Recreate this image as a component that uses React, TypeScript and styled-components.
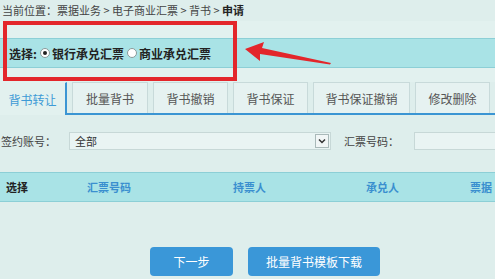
import styled, { createGlobalStyle } from "styled-components";

const GlobalStyle = createGlobalStyle`
  html, body {
    margin: 0;
    padding: 0;
    background: #deeeec;
    overflow: hidden;
  }
  body {
    font-family: "Noto Sans CJK SC", "Noto Sans", sans-serif;
    color: #333;
  }
`;

const Page = styled.div`
  width: 495px;
  height: 279px;
  display: flex;
  flex-direction: column;
  position: relative;
  overflow: hidden;
`;

// breadcrumb along the top
const Crumbs = styled.div`
  height: 21px;
  padding-left: 2px;
  font-size: 11px;
  line-height: 20px;
  color: #444;
  white-space: nowrap;
`;

const Current = styled.b`
  color: #222;
`;

// area with the bill type choice
const ChoiceArea = styled.div`
  height: 61px;
  padding-top: 17px;
  box-sizing: border-box;
  background: #e2f1ef;
`;

const Band = styled.div`
  height: 30px;
  background: #a9e3e6;
  border-top: 1px solid #8ccfd6;
  border-bottom: 1px solid #8ccfd6;
  box-sizing: border-box;
  display: flex;
  align-items: center;
  padding-left: 9px;
  font-size: 12px;
  font-weight: bold;
  color: #222;
  white-space: nowrap;
`;

const Radio = styled.span<{ $on?: boolean }>`
  width: 8px;
  height: 8px;
  border-radius: 50%;
  border: 1px solid #8a9a9a;
  background: #fff;
  display: inline-flex;
  align-items: center;
  justify-content: center;
  margin: 0 2px 0 3px;
  flex-shrink: 0;
  &::after {
    content: "";
    width: 4px;
    height: 4px;
    border-radius: 50%;
    background: ${(p) => (p.$on ? "#222" : "transparent")};
  }
`;

// annotation overlay
const RedBox = styled.div`
  position: absolute;
  left: 3px;
  top: 21px;
  width: 234px;
  height: 60px;
  border: 4px solid #e3262b;
  box-sizing: border-box;
  pointer-events: none;
`;

const Arrow = styled.svg`
  position: absolute;
  left: 243px;
  top: 40px;
`;

// tabs
const TabBar = styled.div`
  height: 33px;
  display: flex;
  gap: 5px;
  align-items: flex-end;
  border-bottom: 2px solid #3b95d3;
  box-sizing: border-box;
`;

const Tab = styled.div<{ $active?: boolean; $w: number }>`
  width: ${(p) => p.$w}px;
  height: ${(p) => (p.$active ? 33 : 31)}px;
  box-sizing: border-box;
  display: flex;
  align-items: center;
  justify-content: center;
  font-size: 12px;
  color: ${(p) => (p.$active ? "#3d9ad6" : "#555")};
  background: ${(p) => (p.$active ? "#e2f1ef" : "#e6f2f1")};
  border: 1px solid ${(p) => (p.$active ? "#3b95d3" : "#c8dada")};
  border-left: ${(p) => (p.$active ? "none" : "1px solid #c8dada")};
  border-right-width: ${(p) => (p.$active ? 2 : 1)}px;
  border-top-color: ${(p) => (p.$active ? "#e2f1ef" : "#c8dada")};
  border-bottom: none;
  margin-bottom: ${(p) => (p.$active ? -2 : 0)}px;
  flex-shrink: 0;
`;

// search form row
const FormRow = styled.div`
  margin-top: 16px;
  height: 20px;
  display: flex;
  align-items: center;
  font-size: 11px;
  color: #444;
  white-space: nowrap;
`;

const Label = styled.span<{ $w: number; $ml?: number }>`
  width: ${(p) => p.$w}px;
  margin-left: ${(p) => p.$ml ?? 0}px;
  flex-shrink: 0;
`;

const Select = styled.div`
  width: 262px;
  height: 18px;
  box-sizing: border-box;
  border: 1px solid #c7d8d7;
  background: #e9f4f3;
  display: flex;
  align-items: center;
  padding-left: 5px;
  flex-shrink: 0;
`;

const SelectText = styled.span`
  flex: 1;
  color: #333;
`;

const Caret = styled.span`
  width: 14px;
  height: 14px;
  margin-right: 1px;
  border: 1px solid #a9b9b9;
  box-sizing: border-box;
  background: #f1f6f6;
  display: flex;
  align-items: center;
  justify-content: center;
`;

const Input = styled.div`
  width: 100px;
  height: 18px;
  border: 1px solid #c7d8d7;
  background: #e9f4f3;
  box-sizing: border-box;
  flex-shrink: 0;
`;

// list header
const TableHead = styled.div`
  margin-top: 21px;
  height: 30px;
  background: #a9e3e6;
  border-top: 1px solid #8ccfd6;
  border-bottom: 1px solid #8ccfd6;
  box-sizing: border-box;
  display: flex;
  align-items: center;
  padding-left: 6px;
  font-size: 11px;
  font-weight: bold;
  white-space: nowrap;
`;

const Col = styled.span<{ $x: number; $blue?: boolean }>`
  width: ${(p) => p.$x}px;
  flex-shrink: 0;
  color: ${(p) => (p.$blue ? "#3a8fcf" : "#222")};
`;

const Actions = styled.div`
  margin-top: 45px;
  display: flex;
  gap: 15px;
  padding-left: 150px;
`;

const Button = styled.div<{ $w: number }>`
  width: ${(p) => p.$w}px;
  height: 29px;
  border-radius: 4px;
  background: #3a97d8;
  color: #fff;
  font-size: 12px;
  display: flex;
  align-items: center;
  justify-content: center;
  flex-shrink: 0;
`;

const tabs = [
  { name: "背书转让", w: 67, active: true },
  { name: "批量背书", w: 76 },
  { name: "背书撤销", w: 75 },
  { name: "背书保证", w: 75 },
  { name: "背书保证撤销", w: 97 },
  { name: "修改删除", w: 75 },
];

const App = () => {
  return (
    <Page>
      <GlobalStyle />
      <Crumbs>
        当前位置：票据业务 &gt; 电子商业汇票 &gt; 背书 &gt; <Current>申请</Current>
      </Crumbs>

      <ChoiceArea>
        <Band>
          <span>选择:</span>
          <Radio $on />
          <span>银行承兑汇票</span>
          <Radio />
          <span>商业承兑汇票</span>
        </Band>
      </ChoiceArea>

      <TabBar>
        {tabs.map((t) => (
          <Tab key={t.name} $w={t.w} $active={t.active}>
            {t.name}
          </Tab>
        ))}
      </TabBar>

      <FormRow>
        <Label $w={68} $ml={1}>签约账号：</Label>
        <Select>
          <SelectText>全部</SelectText>
          <Caret>
            <svg width="8" height="6" viewBox="0 0 8 6">
              <path d="M1 1.5 L4 4.5 L7 1.5" fill="none" stroke="#333" strokeWidth="1.5" />
            </svg>
          </Caret>
        </Select>
        <Label $w={70} $ml={13}>汇票号码：</Label>
        <Input />
      </FormRow>

      <TableHead>
        <Col $x={81}>选择</Col>
        <Col $x={146} $blue>汇票号码</Col>
        <Col $x={133} $blue>持票人</Col>
        <Col $x={104} $blue>承兑人</Col>
        <Col $x={25} $blue>票据</Col>
      </TableHead>

      <Actions>
        <Button $w={83}>下一步</Button>
        <Button $w={132}>批量背书模板下载</Button>
      </Actions>

      <RedBox />
      <Arrow width="92" height="26" viewBox="0 0 92 26">
        <path d="M2 9 L21 2 L19 8 L88 23 L87 24.5 L17 14 L17 21 Z" fill="#e3262b" />
      </Arrow>
    </Page>
  );
};

export default App;
